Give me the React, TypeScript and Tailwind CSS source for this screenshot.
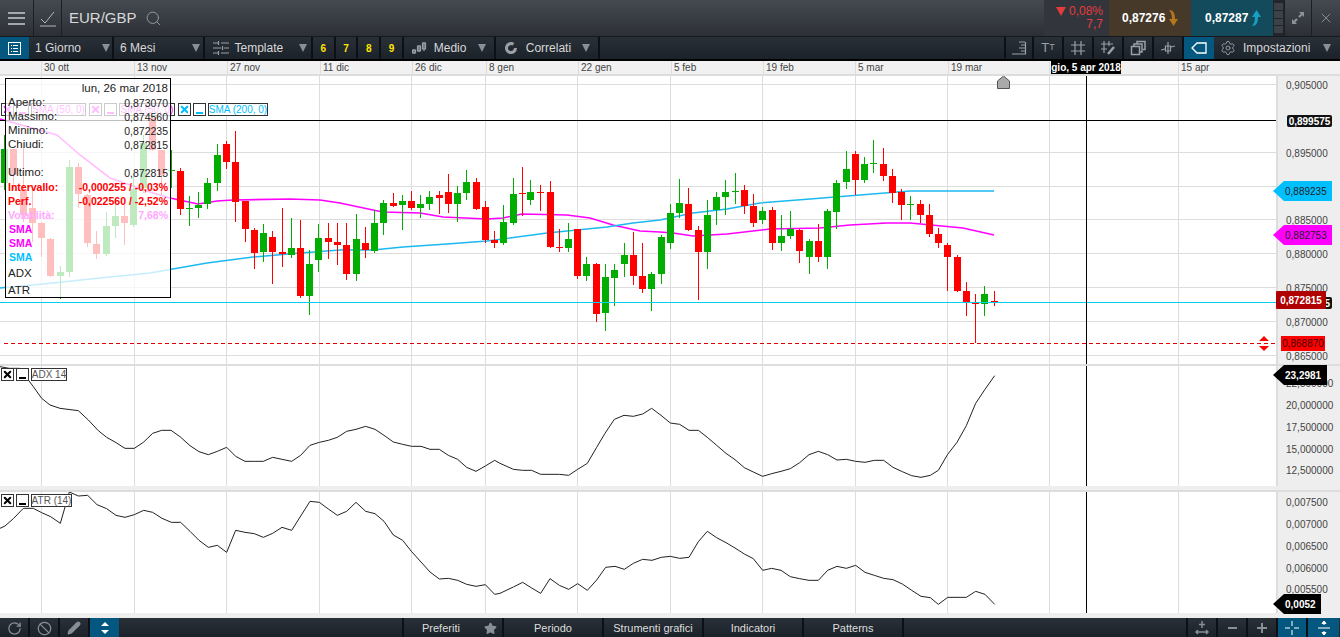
import { Ban, Pencil, RotateCw, Search, Settings, Star, X } from "lucide-react";
import type { ReactNode } from "react";

type Row = [number, number, number, number, number, "r" | "g"];

// candles read off the chart: x, wick top, wick bottom, body top, body bottom
const build = (ox: number, oy: number, rows: Row[]) =>
  rows.map(([x, hi, lo, top, bot, col]) => ({
    x: ox + x / 3,
    hi: oy + hi / 3,
    lo: oy + lo / 3,
    top: oy + top / 3,
    bot: oy + bot / 3,
    col,
  }));

const candles = [
  ...build(0, 75, [
    [13, 180, 345, 222, 325, "g"], [41, 222, 345, 222, 300, "r"], [69, 215, 440, 345, 420, "r"],
    [97, 340, 500, 400, 445, "r"], [124, 440, 547, 445, 490, "r"], [152, 490, 607, 492, 603, "r"],
    [180, 573, 673, 591, 603, "g"], [207, 255, 605, 275, 590, "g"], [235, 265, 400, 275, 358, "r"],
    [262, 358, 515, 360, 505, "r"], [290, 468, 552, 507, 537, "r"], [318, 410, 542, 453, 537, "g"],
    [345, 385, 490, 423, 452, "g"], [373, 390, 510, 423, 445, "r"], [401, 290, 455, 343, 450, "g"],
    [429, 180, 355, 205, 340, "g"], [457, 100, 228, 130, 225, "r"], [485, 225, 360, 225, 300, "r"],
    [513, 225, 338, 285, 289, "g"], [541, 280, 420, 288, 402, "r"], [568, 363, 452, 399, 401, "g"],
    [596, 352, 430, 390, 398, "g"], [623, 310, 402, 324, 386, "g"], [651, 207, 347, 240, 323, "g"],
    [679, 197, 282, 207, 260, "r"], [707, 168, 440, 262, 380, "r"], [735, 378, 500, 378, 461, "r"],
    [763, 460, 581, 465, 533, "r"], [790, 447, 560, 474, 530, "g"], [818, 468, 627, 486, 530, "r"],
    [846, 400, 575, 531, 538, "r"], [873, 430, 548, 519, 539, "g"], [901, 435, 670, 519, 663, "r"],
    [928, 525, 720, 567, 662, "g"], [956, 447, 590, 489, 555, "g"], [985, 445, 552, 489, 500, "r"],
    [1012, 445, 570, 500, 510, "r"],
  ]),
  ...build(340, 130, [
    [19, 279, 450, 345, 432, "r"], [48, 252, 453, 327, 432, "g"], [76, 291, 384, 339, 360, "r"],
    [102, 240, 369, 279, 362, "g"], [129, 210, 315, 219, 279, "g"], [160, 189, 231, 219, 228, "r"],
    [186, 195, 300, 213, 225, "g"], [214, 183, 240, 213, 234, "r"], [240, 195, 264, 222, 234, "g"],
    [267, 183, 240, 201, 222, "g"], [298, 183, 252, 195, 204, "r"], [325, 132, 249, 186, 222, "r"],
    [351, 168, 276, 189, 222, "g"], [378, 120, 210, 156, 189, "g"], [409, 144, 240, 156, 237, "r"],
    [436, 213, 339, 231, 330, "r"], [463, 303, 354, 330, 339, "r"], [489, 225, 345, 276, 339, "g"],
    [519, 144, 285, 192, 279, "g"], [547, 111, 258, 189, 191, "r"], [572, 150, 225, 186, 210, "g"],
    [601, 165, 243, 186, 188, "r"], [631, 153, 354, 186, 351, "r"], [658, 297, 366, 351, 353, "r"],
    [684, 279, 366, 327, 354, "g"], [712, 297, 447, 297, 438, "r"], [740, 381, 453, 402, 438, "g"],
    [769, 399, 576, 402, 552, "r"], [795, 402, 603, 441, 549, "g"], [822, 402, 528, 420, 444, "g"],
    [852, 339, 441, 375, 402, "g"], [880, 306, 465, 375, 438, "r"], [907, 339, 489, 438, 477, "r"],
    [933, 426, 543, 432, 477, "g"], [963, 315, 462, 321, 432, "g"],
  ]),
  ...build(660, 130, [
    [30, 222, 357, 249, 339, "g"], [57, 147, 264, 219, 249, "g"], [85, 174, 303, 222, 300, "r"],
    [115, 288, 510, 300, 366, "r"], [141, 210, 417, 255, 366, "g"], [168, 186, 285, 201, 240, "g"],
    [195, 150, 255, 186, 201, "g"], [225, 129, 222, 182, 184, "g"], [253, 165, 252, 180, 228, "r"],
    [280, 192, 291, 228, 279, "r"], [306, 231, 282, 243, 270, "g"], [338, 231, 360, 240, 339, "r"],
    [363, 255, 363, 318, 339, "g"], [390, 243, 327, 297, 318, "g"], [418, 297, 399, 300, 363, "r"],
    [447, 327, 432, 333, 381, "g"], [475, 282, 396, 333, 381, "r"], [501, 237, 417, 243, 381, "g"],
    [528, 150, 297, 159, 246, "g"], [558, 63, 177, 117, 156, "g"], [586, 63, 195, 72, 150, "r"],
    [612, 81, 159, 102, 150, "g"], [640, 30, 129, 99, 101, "g"], [670, 54, 153, 102, 138, "r"],
    [697, 117, 219, 138, 190, "r"], [724, 177, 270, 186, 225, "r"], [751, 198, 270, 222, 224, "g"],
    [781, 210, 279, 222, 255, "r"], [808, 222, 321, 255, 312, "r"], [835, 294, 354, 312, 339, "r"],
    [862, 339, 483, 345, 381, "r"], [892, 375, 486, 381, 483, "r"], [919, 456, 558, 483, 516, "r"],
    [946, 492, 639, 519, 521, "r"], [972, 468, 558, 492, 522, "g"], [1003, 483, 528, 513, 515, "r"],
  ]),
];

const sma50 = "0,119 57,135 80,155 110,178 150,192 170,198 198,204 217,201 233,200 290,199 320,200 340,203 373,210 383,212 420,213 443,217 487,219 503,218 522,214 567,215 590,218 613,225 640,231 660,232 673,233 693,236 727,234 753,231 770,229 820,228 850,225 887,223 910,223 963,228 994,235";
const sma200 = "0,288 43,284 100,278 150,273 207,263 253,257 300,253 340,250 373,250 403,247 447,244 487,241 547,233 607,227 633,223 660,220 693,213 727,209 760,203 810,199 860,195 910,191 943,191 967,191 994,191";

const line = (ox: number, oy: number, raw: number[][]) =>
  raw.map(([x, y]) => `${ox + x / 3},${oy + y / 3}`).join(" ");

const adx = [
  line(0, 360, [[0,20],[28,25],[58,25],[85,60],[100,80],[125,115],[150,135],[180,145],[235,152],[265,180],[295,212],[320,232],[345,246],[375,265],[403,265],[430,247],[458,220],[485,211],[513,211],[540,230],[570,257],[597,275],[625,284],[652,274],[680,262],[707,289],[735,304],[763,304],[790,304],[818,292],[846,298],[875,304],[902,286],[930,256],[958,247],[985,241],[1012,232],[1040,214],[1068,208],[1097,199],[1125,208],[1152,226],[1180,246],[1208,253],[1235,259],[1263,259],[1290,268],[1318,268],[1345,286],[1373,298],[1400,322],[1428,334],[1456,318],[1484,301],[1500,310]]),
  line(500, 360, [[40,328],[68,331],[95,331],[122,343],[150,343],[178,343],[206,346],[233,328],[262,310],[290,262],[315,220],[343,178],[372,166],[400,169],[428,162],[455,145],[483,166],[511,189],[539,193],[567,211],[595,211],[622,232],[650,256],[678,280],[705,299],[733,323],[760,336],[788,349],[815,341],[843,334],[871,326],[899,308],[927,284],[955,274],[983,284],[1011,300],[1039,298],[1067,304],[1095,307],[1123,301],[1151,301],[1179,322],[1207,335],[1235,347],[1263,352],[1291,346],[1315,331],[1343,283],[1371,247],[1399,197],[1427,130],[1455,88],[1484,47]]),
].join(" ");

const atr = [
  line(0, 360, [[0,505],[15,498],[40,476],[70,445],[100,445],[125,458],[152,470],[181,490],[208,396],[235,408],[263,406],[291,434],[320,446],[348,466],[375,472],[403,464],[431,451],[458,457],[486,475],[514,487],[542,487],[570,514],[597,541],[625,562],[652,556],[680,577],[707,511],[735,517],[763,521],[790,532],[818,520],[846,502],[875,511],[930,424],[958,427],[985,447],[1012,466],[1040,454],[1068,427],[1097,454],[1125,461],[1152,484],[1180,525],[1208,541],[1235,575],[1263,606],[1290,636],[1318,657],[1345,655],[1373,661],[1400,673],[1428,679],[1456,674],[1484,703],[1500,700]]),
  line(500, 360, [[40,681],[68,667],[95,684],[122,700],[150,656],[178,676],[206,688],[233,671],[262,691],[290,660],[317,622],[345,619],[373,628],[400,610],[428,598],[456,601],[484,592],[511,589],[539,595],[567,592],[595,545],[622,514],[650,533],[678,548],[705,564],[733,582],[760,596],[788,631],[815,625],[843,631],[871,650],[899,656],[927,661],[955,661],[983,631],[1011,619],[1039,625],[1067,616],[1095,637],[1123,646],[1151,655],[1179,659],[1207,672],[1235,691],[1263,709],[1291,713],[1315,733],[1343,712],[1371,712],[1399,712],[1427,694],[1455,703],[1484,733]]),
].join(" ");

const gridX = [41.5, 134.5, 226.5, 319.5, 411.5, 485.5, 577.5, 670.5, 762.5, 855.5, 947.5, 1049.5, 1178.5];
const gridY = [84.5, 152.5, 186.5, 219.5, 253.5, 287.5, 321.5, 355.5];
const dates: [number, string][] = [
  [134, "30 ott"], [227, "13 nov"], [320, "27 nov"], [412, "11 dic"], [486, "26 dic"], [578, "8 gen"], [671, "22 gen"],
  [763, "5 feb"], [855, "19 feb"], [948, "5 mar"], [1049, "19 mar"], [1178, ""], [1276, "15 apr"],
];

function Caret({ className = "" }: { className?: string }) {
  return <span className={`h-0 w-0 border-x-[4px] border-t-[8px] border-x-transparent border-t-[#8a8f96] ${className}`} />;
}

function Ico({ children, w = 16 }: { children: ReactNode; w?: number }) {
  return (
    <svg width={w} height="16" viewBox="0 0 16 16" fill="none" stroke="#9aa0a6" strokeWidth="1.2">
      {children}
    </svg>
  );
}

function TopBar() {
  return (
    <div className="flex h-[37px] border-b border-[#15181c] bg-gradient-to-b from-[#454a51] to-[#2c3036] text-[#d8d8d8]">
      <div className="flex w-[34px] flex-col justify-center gap-[3.5px] border-r border-[#1c1f24] px-[8px]">
        <div className="h-[2px] bg-[#a5a8ab]" />
        <div className="h-[2px] bg-[#a5a8ab]" />
        <div className="h-[2px] bg-[#a5a8ab]" />
      </div>
      <div className="flex w-[28px] items-center justify-center border-r border-[#1c1f24]">
        <svg width="18" height="18" viewBox="0 0 18 18" fill="none" stroke="#b5b8bb" strokeWidth="1">
          <path d="M2 10l4 4 9-11M1 17h16" />
        </svg>
      </div>
      <div className="ml-[7px] flex flex-1 items-center gap-[8px] text-[15px]">
        EUR/GBP
        <Search size={17} strokeWidth={1.3} color="#9a9ea3" />
      </div>
      <div className="flex w-[65px] flex-col items-end justify-center bg-[#32363c] pr-[6px] text-[12px] leading-[13px] text-[#e23c3c]">
        <span className="flex items-center gap-[3px]">
          <span className="h-0 w-0 border-x-[5px] border-t-[9px] border-x-transparent border-t-[#e23c3c]" />
          0,08%
        </span>
        <span>7,7</span>
      </div>
      <div className="flex w-[82px] items-center gap-[3px] bg-[#46392a] pl-[13px] text-[12px] font-bold text-white">
        0,87276
        <svg width="11" height="18" viewBox="0 0 11 18" fill="#b5771c">
          <path d="M1 1c4 0 6 3 6 9h3l-4.5 7L1 10h3C4 6 3 3 1 1z" />
        </svg>
      </div>
      <div className="flex w-[82px] items-center gap-[3px] bg-[#134b5c] pl-[14px] text-[12px] font-bold text-white">
        0,87287
        <svg width="11" height="18" viewBox="0 0 11 18" fill="#18a0c4">
          <path d="M1 17c4 0 6-3 6-9h3L5.5 1 1 8h3c0 4-1 7-3 9z" />
        </svg>
      </div>
      <div className="flex w-[12px] flex-col gap-px border-r border-[#1c1f24] bg-[#22262b] px-px py-[3px]">
        <div className="flex-1 bg-[#3c4148]" />
        <div className="flex-1 bg-[#3c4148]" />
        <div className="flex-1 bg-[#3c4148]" />
        <div className="flex-1 bg-[#3c4148]" />
      </div>
      <div className="flex w-[27px] items-center justify-center border-r border-[#1c1f24]">
        <svg width="14" height="14" viewBox="0 0 14 14" fill="#8d9196">
          <path d="M8 1h5v5l-1.7-1.7-2.5 2.5-1.6-1.600 2.500-2.500zM6 13H1V8l1.700 1.700 2.500-2.500 1.600 1.600-2.500 2.500z" />
        </svg>
      </div>
      <div className="flex w-[28px] items-center justify-center">
        <X size={16} strokeWidth={1.4} color="#8d9196" />
      </div>
    </div>
  );
}

function Seg({ w, children, className = "" }: { w: number; children?: ReactNode; className?: string }) {
  return (
    <div className={`flex shrink-0 items-center border-r-2 border-[#0d1014] ${className}`} style={{ width: w }}>
      {children}
    </div>
  );
}

function ToolBar() {
  return (
    <div className="flex h-[24px] border-b-2 border-black bg-gradient-to-b from-[#2a3038] to-[#1c222a] text-[12px] text-[#d8d8d8]">
      <div className="flex w-[29px] items-center justify-center bg-[#04587f]">
        <svg width="15" height="15" viewBox="0 0 15 15" fill="none" stroke="#fff">
          <rect x="1.5" y="1.5" width="12" height="12" />
          <path d="M4 4.5h1M6 4.5h5M4 7.500h1M6 7.500h5M4 10.500h1M6 10.500h5" />
        </svg>
      </div>
      <Seg w={85} className="justify-between pl-[6px] pr-[2px]">1 Giorno<Caret /></Seg>
      <Seg w={90.5} className="justify-between pl-[6px] pr-[3px]">6 Mesi<Caret /></Seg>
      <Seg w={108.5} className="gap-[6px] pl-[8px]">
        <Ico><path d="M0 3h5M8 3h8M5.5 1v4M0 8h8M11 8h5M9.5 6v4M0 13h5M8 13h8M5.5 11v4" /></Ico>
        Template<Caret className="ml-[10px]" />
      </Seg>
      {["6", "7", "8", "9"].map((n) => (
        <Seg key={n} w={22.7} className="justify-center text-[10px] font-bold text-[#ffe600]">{n}</Seg>
      ))}
      <Seg w={92} className="gap-[6px] pl-[8px]">
        <Ico><path d="M2 9v5M7 5v7M12 2v9M0.5 10h3v3h-3zM5.5 6h3v5h-3zM10.5 3h3v6h-3z" /></Ico>
        Medio<Caret className="ml-[6px]" />
      </Seg>
      <Seg w={104} className="gap-[8px] pl-[8px]">
        <svg width="14" height="14" viewBox="0 0 14 14" fill="none" stroke="#9aa0a6" strokeWidth="3">
          <path d="M11.5 7a4.500 4.500 0 1 1-2-3.700" />
        </svg>
        Correlati<Caret className="ml-[3px]" />
      </Seg>
      <div className="flex-1" />
      <div className="flex w-[30px] items-center justify-center border-x-2 border-[#0d1014]">
        <Ico><path d="M1 14h14M14.5 2v12M8 2h6M10 5h4M8 8h6M10 11h4" /></Ico>
      </div>
      <Seg w={30} className="justify-center text-[13px] text-[#9aa0a6]">T<span className="text-[9px]">T</span></Seg>
      <Seg w={30} className="justify-center"><Ico><path d="M5 1v14M11 1v14M1 5h14M1 11h14" /></Ico></Seg>
      <Seg w={30} className="justify-center">
        <Ico><path d="M4 1v12M9 1v5M1 4h12M1 9h6" /><path d="M8 14l6-7" strokeWidth="2.5" /></Ico>
      </Seg>
      <Seg w={30} className="justify-center">
        <Ico><path d="M1.5 6.5h8v8h-8zM4 6V4h8v8h-2M7 3.500V1.500h8v8h-2" strokeWidth="1.5" /></Ico>
      </Seg>
      <Seg w={30} className="justify-center">
        <Ico><path d="M1 10l4-1M11 7l4-1M8 2v12M5.500 6h5v5h-5z" /></Ico>
      </Seg>
      <div className="flex w-[30px] items-center justify-center bg-[#04587f]">
        <svg width="16" height="14" viewBox="0 0 16 14" fill="none" stroke="#fff" strokeWidth="1.3">
          <path d="M15 2H6L1 7l5 5h9z" />
        </svg>
      </div>
      <div className="flex w-[126px] items-center gap-[7px] pl-[6px]">
        <Settings size={16} strokeWidth={1.4} color="#9aa0a6" />
        <span>Impostazioni</span>
        <Caret className="ml-[6px]" />
      </div>
    </div>
  );
}

function TimeAxis() {
  let prev = 0;
  return (
    <div className="relative flex h-[15px] border-b-2 border-[#ddd] bg-[#f1f1f1] text-[10px] leading-[13px] text-[#444]">
      <div className="w-[41px] shrink-0" />
      {dates.map(([end, label], i) => {
        const start = i === 0 ? 41 : prev;
        prev = end;
        return (
          <div key={end} className="shrink-0 border-l border-[#ddd] pl-[2px]" style={{ width: end - start }}>
            {label}
          </div>
        );
      })}
      <div className="absolute left-[1051px] top-0 h-[13px] w-[70px] bg-black text-center font-bold text-white">
        gio, 5 apr 2018
      </div>
    </div>
  );
}

function Chip({ label, color = "#333", w }: { label: string; color?: string; w: number }) {
  const mark = color === "#333" ? "#000" : color;
  const textColor = color === "#333" ? "#555" : color;
  return (
    <div className="flex h-[13px] items-center gap-[2px] whitespace-nowrap text-[10px] leading-none">
      <div className="flex h-[13px] w-[13px] items-center justify-center border border-[#333] bg-white">
        <X size={11} strokeWidth={4.5} color={mark} />
      </div>
      <div className="flex h-[13px] w-[13px] items-end justify-center border border-[#333] bg-white pb-[1px]">
        <div className="h-[2px] w-[7px]" style={{ background: mark }} />
      </div>
      <div className="flex h-[13px] items-center justify-center border border-[#333] bg-white" style={{ width: w, color: textColor }}>{label}</div>
    </div>
  );
}

function Tick({ y, label }: { y: number; label: string }) {
  return (
    <span className="absolute left-[8px] -translate-y-1/2 text-[10px] leading-none text-[#444]" style={{ top: y }}>
      {label}
    </span>
  );
}

function Flag({ y, h, right, bg, text, bold }: { y: number; h: number; right: number; bg: string; text: string; bold?: boolean }) {
  return (
    <div className="absolute flex items-center" style={{ top: y, left: -5, height: h, width: right - 1273 }}>
      <div className="h-0 w-0 border-r-[11px] border-y-transparent" style={{ borderTopWidth: h / 2, borderBottomWidth: h / 2, borderRightColor: bg }} />
      <div className={`flex h-full flex-1 items-center pl-[1px] text-[10px] ${bold ? "font-bold text-white" : "text-[#222]"}`} style={{ background: bg }}>
        {text}
      </div>
    </div>
  );
}

function Pane({ top, h, axis, children, overlay }: { top: number; h: number; axis: ReactNode; children: ReactNode; overlay?: ReactNode }) {
  return (
    <div className="relative flex" style={{ height: h }}>
      <svg width="1276" height={h} viewBox={`0 ${top} 1276 ${h}`} className="shrink-0 bg-white">
        <g shapeRendering="crispEdges" stroke="#ddd" strokeWidth="1">
          {gridX.map((x) => <line key={x} x1={x} x2={x} y1={top} y2={top + h} />)}
        </g>
        {children}
        <line x1="1086.5" x2="1086.5" y1={top} y2={top + h} stroke="#000" shapeRendering="crispEdges" />
      </svg>
      <div className="relative w-[64px] shrink-0 border-l-2 border-[#ddd] bg-[#eee]">{axis}</div>
      {overlay}
    </div>
  );
}

function InfoRow({ a, b, small, className = "" }: { a: string; b?: string; small?: boolean; className?: string }) {
  return (
    <div className={`flex h-[14px] items-center justify-between leading-none ${small ? "text-[10.5px]" : "text-[11.5px]"} ${className}`}>
      <span>{a}</span>
      {b && <span className="text-[10.5px]">{b}</span>}
    </div>
  );
}

function InfoPanel() {
  return (
    <div className="absolute left-[5px] top-[2px] h-[220px] w-[166px] border border-black bg-white/75 px-[2px] pt-[3px] text-[#222]">
      <div className="flex h-[14px] items-center justify-end text-[11.5px] leading-none">lun, 26 mar 2018</div>
      <InfoRow a="Aperto:" b="0,873070" />
      <InfoRow a="Massimo:" b="0,874560" />
      <InfoRow a="Minimo:" b="0,872235" />
      <InfoRow a="Chiudi:" b="0,872815" />
      <div className="h-[14px]" />
      <InfoRow a="Ultimo:" b="0,872815" />
      <InfoRow a="Intervallo:" b="-0,000255 / -0,03%" small className="font-bold text-[#f00]" />
      <InfoRow a="Perf." b="-0,022560 / -2,52%" small className="font-bold text-[#f00]" />
      <InfoRow a="Volatilità:" b="7,68%" small className="font-bold text-[#ffa8ff]" />
      <InfoRow a="SMA" small className="pl-px font-bold text-[#f0f]" />
      <InfoRow a="SMA" small className="pl-px font-bold text-[#f0f]" />
      <InfoRow a="SMA" small className="pl-px font-bold text-[#00bfff]" />
      <InfoRow a="ADX" className="mt-[3px]" />
      <InfoRow a="ATR" className="mt-[3px]" />
    </div>
  );
}

function MainChart() {
  return (
    <Pane
      top={76}
      h={288}
      axis={
        <>
          <Tick y={10} label="0,905000" />
          <Tick y={78} label="0,895000" />
          <Tick y={145} label="0,885000" />
          <Tick y={179} label="0,880000" />
          <Tick y={213} label="0,875000" />
          <Tick y={247} label="0,870000" />
          <Tick y={281} label="0,865000" />
          <div className="absolute left-[9px] top-[39px] flex h-[12px] w-[45px] items-center justify-center rounded-[2px] bg-[#111] text-[10px] font-bold text-white">0,899575</div>
          <Flag y={105} h={20} right={1332} bg="#00bfff" text="0,889235" />
          <Flag y={149} h={20} right={1332} bg="#ff00ff" text="0,882753" />
          <div className="absolute left-[9px] top-[221px] flex h-[12px] w-[45px] items-center justify-end rounded-[2px] bg-[#111] pr-[2px] text-[10px] font-bold text-white">5</div>
          <div className="absolute left-[-2px] top-[215px] flex h-[18px] w-[50px] items-center justify-center rounded-[1px] bg-[#b00000] text-[10px] font-bold text-white">0,872815</div>
          <div className="absolute left-[3px] top-[260px] flex h-[15px] w-[44px] items-center justify-center bg-[#f00] text-[10px] text-[#400]">0,868870</div>
        </>
      }
      overlay={
        <>
          <div className="absolute left-[1px] top-[27px] flex gap-[3px]">
            <Chip label="SMA (50, 0)" color="#ff00ff" w={55} />
            <Chip label="SMA (50, 0)" color="#ff00ff" w={56} />
            <Chip label="SMA (200, 0)" color="#00bfff" w={60} />
          </div>
          <InfoPanel />
        </>
      }
    >
      <g shapeRendering="crispEdges" stroke="#ddd">
        {gridY.map((y) => <line key={y} x1="0" x2="1276" y1={y} y2={y} />)}
      </g>
      <polyline points={sma50} fill="none" stroke="#ff00ff" strokeWidth="1.6" />
      <polyline points={sma200} fill="none" stroke="#1cb8f2" strokeWidth="1.5" />
      <g shapeRendering="crispEdges">
        {candles.map((c) => {
          const fill = c.col === "r" ? "#ff0000" : "#00ad00";
          const left = Math.round(c.x - 3.5);
          return (
            <g key={c.x} fill={fill}>
              <rect x={left + 3} y={c.hi} width="1" height={c.lo - c.hi} />
              <rect x={left} y={c.top} width="7" height={Math.max(c.bot - c.top, 1)} />
            </g>
          );
        })}
      </g>
      <line x1="0" x2="1277" y1="120.5" y2="120.5" stroke="#000" shapeRendering="crispEdges" />
      <line x1="0" x2="1276" y1="302.5" y2="302.5" stroke="#00d0ee" shapeRendering="crispEdges" />
      <line x1="4" x2="1276" y1="343.5" y2="343.5" stroke="#e00000" strokeDasharray="4 3" shapeRendering="crispEdges" />
      <path d="M1264 336l5 5h-10zM1264 351l5-5h-10z" fill="#f00" />
      <path d="M997.5 88.5V81l6-5 6 5v7.5z" fill="#aaa" stroke="#555" />
    </Pane>
  );
}

function Indicator({ top, h, pts, label, w, axis }: { top: number; h: number; pts: string; label: string; w: number; axis: ReactNode }) {
  return (
    <Pane
      top={top}
      h={h}
      axis={axis}
      overlay={
        <div className="absolute left-[1px] top-[2px]">
          <Chip label={label} w={w} />
        </div>
      }
    >
      <polyline points={pts} fill="none" stroke="#222" strokeWidth="1" />
    </Pane>
  );
}

function BottomBtn({ w, label, children, className = "justify-center" }: { w: number; label?: string; children?: ReactNode; className?: string }) {
  return (
    <div className={`flex shrink-0 items-center border-r-2 border-[#0d1014] pt-px text-[11px] text-[#ddd] ${className}`} style={{ width: w }}>
      {label}
      {children}
    </div>
  );
}

function BottomBar() {
  return (
    <div className="flex h-[19px] bg-gradient-to-b from-[#2a3038] to-[#1c222a] [&>*]:h-full">
      <BottomBtn w={30}><RotateCw size={15} color="#8a8f96" strokeWidth={2} /></BottomBtn>
      <BottomBtn w={30}><Ban size={15} color="#8a8f96" strokeWidth={2} /></BottomBtn>
      <BottomBtn w={30}><Pencil size={14} color="#8a8f96" fill="#8a8f96" /></BottomBtn>
      <div className="flex w-[29px] items-center justify-center bg-[#04587f]">
        <svg width="12" height="16" viewBox="0 0 12 16" fill="#fff"><path d="M6 2l4 4H2zM6 14l4-4H2z" /></svg>
      </div>
      <div className="w-[285px] border-r-2 border-[#0d1014]" />
      <BottomBtn w={100} label="Preferiti" className="gap-[24px] pl-[18px]"><Star size={13} color="#8a8f96" fill="#8a8f96" /></BottomBtn>
      <BottomBtn w={100} label="Periodo" />
      <BottomBtn w={100} label="Strumenti grafici" />
      <BottomBtn w={100} label="Indicatori" />
      <BottomBtn w={100} label="Patterns" />
      <div className="w-[284px] border-r-2 border-[#0d1014]" />
      <BottomBtn w={30}>
        <svg width="14" height="16" viewBox="0 0 14 16" fill="none" stroke="#8a8f96" strokeWidth="1.5"><path d="M7 1v7M4 4.5h6M1 12h12M3 10l-2 2 2 2M11 10l2 2-2 2" /></svg>
      </BottomBtn>
      <BottomBtn w={30}><div className="h-[2px] w-[9px] bg-[#8a8f96]" /></BottomBtn>
      <BottomBtn w={30}>
        <svg width="10" height="10" viewBox="0 0 10 10" stroke="#8a8f96" strokeWidth="2"><path d="M5 0v10M0 5h10" /></svg>
      </BottomBtn>
      <div className="flex w-[30px] items-center justify-center border-r-2 border-[#0d1014] bg-[#04587f]">
        <svg width="14" height="14" viewBox="0 0 14 14" stroke="#fff"><path d="M7 0v5M7 9v5M0 7h5M9 7h5" /></svg>
      </div>
      <div className="flex w-[31px] items-center justify-center bg-[#04587f]">
        <svg width="14" height="16" viewBox="0 0 14 16" stroke="#fff" fill="#fff"><path d="M1 8h12M7 2v3M7 11v3M5 3.5L7 1l2 2.500zM5 12.500L7 15l2-2.500z" /></svg>
      </div>
    </div>
  );
}

export default function App() {
  return (
    <div className="h-[637px] w-[1340px] overflow-hidden bg-white [font-family:'Liberation_Sans',Arial,sans-serif]">
      <TopBar />
      <ToolBar />
      <TimeAxis />
      <MainChart />
      <div className="h-[2px] bg-[#ddd]" />
      <Indicator
        top={366}
        h={120}
        pts={adx}
        label="ADX 14"
        w={36}
        axis={
          <>
            <Tick y={18} label="22,500000" />
            <Tick y={40} label="20,000000" />
            <Tick y={62} label="17,500000" />
            <Tick y={84} label="15,000000" />
            <Tick y={105} label="12,500000" />
            <Flag y={-1} h={20} right={1327} bg="#000" text="23,2981" bold />
          </>
        }
      />
      <div className="h-[4px] bg-[#eee]" />
      <div className="h-[2px] bg-[#ddd]" />
      <Indicator
        top={492}
        h={121}
        pts={atr}
        label="ATR (14)"
        w={41}
        axis={
          <>
            <Tick y={11} label="0,007500" />
            <Tick y={33} label="0,007000" />
            <Tick y={55} label="0,006500" />
            <Tick y={77} label="0,006000" />
            <Tick y={98} label="0,005500" />
            <Flag y={102} h={20} right={1321} bg="#000" text="0,0052" bold />
          </>
        }
      />
      <div className="h-[5px] bg-[#eee]" />
      <BottomBar />
    </div>
  );
}
